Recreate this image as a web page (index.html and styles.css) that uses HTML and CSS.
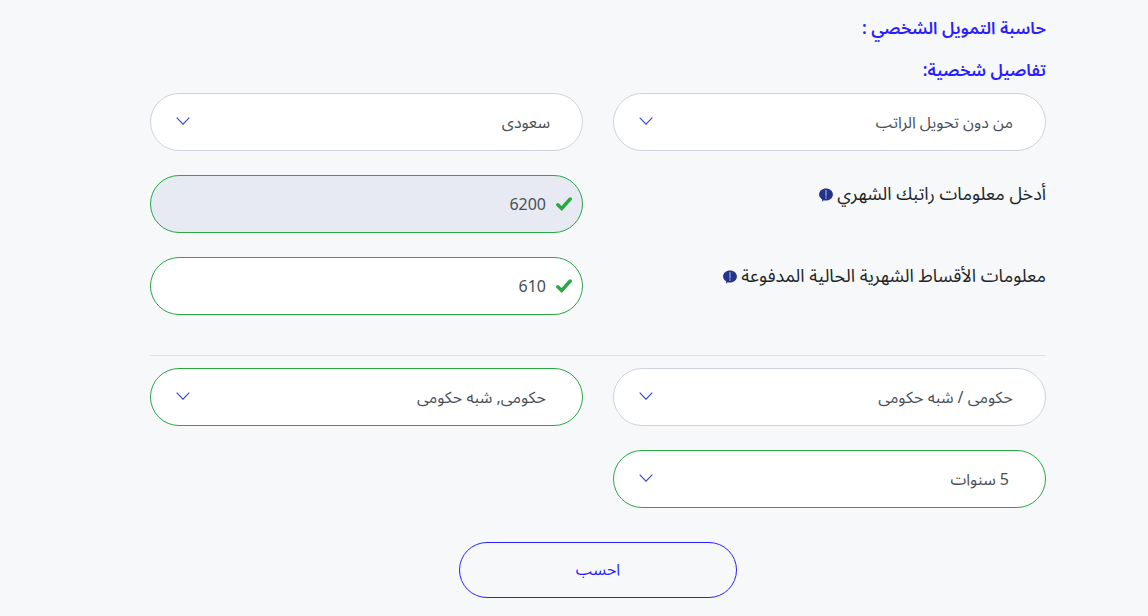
FILE: index.html
```html
<!DOCTYPE html>
<html lang="ar" dir="rtl">
  <head>
    <meta charset="UTF-8" />
    <meta name="viewport" content="width=device-width, initial-scale=1.0" />
    <title>حاسبة التمويل الشخصي</title>
    <link rel="stylesheet" href="styles.css">
  </head>
  <body>
    <form class="calculator">
      <h2 class="title">حاسبة التمويل الشخصي :</h2>
      <h2 class="title">تفاصيل شخصية:</h2>

      <div class="fields">
        <div class="field">
          <select class="control" aria-label="تحويل الراتب">
            <option>من دون تحويل الراتب</option>
          </select>
          <svg class="arrow" viewBox="0 0 14 8"><path d="M0.7 0.7 7 7.2 13.3 0.7" /></svg>
        </div>
        <div class="field">
          <select class="control" aria-label="الجنسية">
            <option>سعودى</option>
          </select>
          <svg class="arrow" viewBox="0 0 14 8"><path d="M0.7 0.7 7 7.2 13.3 0.7" /></svg>
        </div>

        <label class="label" for="salary">
          أدخل معلومات راتبك الشهري
          <svg class="info" viewBox="0 0 14 14"><path class="bubble" d="M7 .5c3.900 0 6.900 2.600 6.900 6s-3 6-6.900 6c-.8 0-1.600-.1-2.300-.3L3.200 13.800 3 11.300C1.300 10.200.1 8.500.1 6.500.1 3.100 3.100.5 7 .5z" /><path class="mark" d="M7 2v6.500M7 9.300v1.500" /></svg>
        </label>
        <div class="field">
          <input class="control valid filled" id="salary" type="text" value="6200">
          <svg class="check" viewBox="0 0 16 14"><path d="M1.800 7.800 5.700 11.500 14.200 2" /></svg>
        </div>

        <label class="label" for="installments">
          معلومات الأقساط الشهرية الحالية المدفوعة
          <svg class="info" viewBox="0 0 14 14"><path class="bubble" d="M7 .5c3.900 0 6.900 2.600 6.900 6s-3 6-6.900 6c-.8 0-1.600-.1-2.300-.3L3.200 13.800 3 11.300C1.300 10.200.1 8.500.1 6.500.1 3.100 3.100.5 7 .5z" /><path class="mark" d="M7 2v6.500M7 9.300v1.500" /></svg>
        </label>
        <div class="field">
          <input class="control valid" id="installments" type="text" value="610">
          <svg class="check" viewBox="0 0 16 14"><path d="M1.800 7.800 5.700 11.500 14.200 2" /></svg>
        </div>
      </div>

      <hr class="line">

      <div class="fields">
        <div class="field">
          <select class="control" aria-label="القطاع">
            <option>حكومى / شبه حكومى</option>
          </select>
          <svg class="arrow" viewBox="0 0 14 8"><path d="M0.7 0.7 7 7.2 13.3 0.7" /></svg>
        </div>
        <div class="field">
          <select class="control valid" aria-label="جهة العمل">
            <option>حكومى, شبه حكومى</option>
          </select>
          <svg class="arrow" viewBox="0 0 14 8"><path d="M0.7 0.7 7 7.2 13.3 0.7" /></svg>
        </div>
        <div class="field">
          <select class="control valid" aria-label="مدة التمويل">
            <option>5 سنوات</option>
          </select>
          <svg class="arrow" viewBox="0 0 14 8"><path d="M0.7 0.7 7 7.2 13.3 0.7" /></svg>
        </div>
      </div>

      <button class="submit" type="button">احسب</button>
    </form>
  </body>
</html>
```
FILE: styles.css
```css
* {
  box-sizing: border-box;
}

body {
  margin: 0;
  background: #f6f8fa;
  color: #212529;
  font-family: "Noto Sans Arabic", "Noto Sans", "DejaVu Sans", sans-serif;
  font-size: 16px;
}

.calculator {
  padding: 13px 102px 16px 150px;
}

.title {
  margin: 0 0 10px;
  color: #2a1fff;
  font-size: 17px;
  font-weight: 600;
  line-height: 32px;
}

.title + .title {
  margin-bottom: 6px;
}

.fields {
  display: grid;
  grid-template-columns: 1fr 1fr;
  gap: 24px 30px;
}

.field {
  position: relative;
}

.control {
  display: block;
  width: 100%;
  height: 58px;
  padding: 2px 32px 0;
  border: 1px solid #ced4da;
  border-radius: 29px;
  background: #fff;
  color: #495057;
  font-family: inherit;
  font-size: 16px;
  appearance: none;
}

.control.valid {
  padding: 2px 36px 0;
  border-color: #28a745;
}

.control.filled {
  background: #e7eaf2;
}

.arrow {
  position: absolute;
  left: 26px;
  top: 24px;
  width: 14px;
  height: 8px;
  fill: none;
  stroke: #3a4bd0;
  stroke-width: 1.2;
  pointer-events: none;
}

.check {
  position: absolute;
  right: 11px;
  top: 22px;
  width: 16px;
  height: 14px;
  fill: none;
  stroke: #28a745;
  stroke-width: 3.4;
  stroke-linecap: round;
}

.label {
  padding-top: 4px;
  font-size: 18px;
  line-height: 30px;
}

.info {
  width: 14px;
  height: 14px;
  vertical-align: -2px;
}

.bubble {
  fill: #24348b;
}

.mark {
  fill: none;
  stroke: #8c97cc;
  stroke-width: 1.4;
}

.line {
  margin: 40px 0 12px;
  border: 0;
  border-top: 1px solid #dee0e3;
}

.submit {
  display: block;
  width: 278px;
  height: 56px;
  margin: 34px auto 0;
  border: 1px solid #2a1fff;
  border-radius: 28px;
  background: transparent;
  color: #2a1fff;
  font-family: inherit;
  font-size: 16px;
}
```
